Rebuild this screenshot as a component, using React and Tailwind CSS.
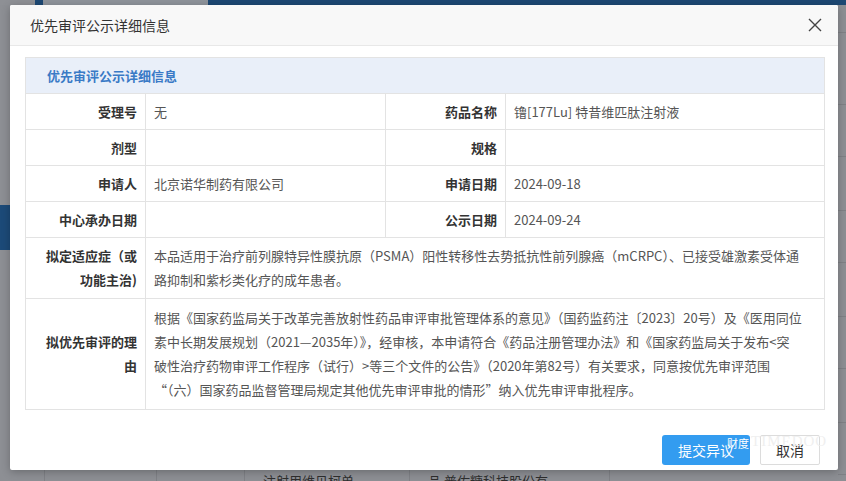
import React from "react";

const FONT = { fontFamily: '"Noto Sans CJK SC", "Noto Sans", "Liberation Sans", sans-serif' };

const LABEL = "flex items-center justify-end pr-[8px] pl-[10px] font-bold text-[#333] text-[13px] border-l border-t border-[#e3e3e3] text-right leading-[24px]";
const VALUE = "flex items-center pl-[8px] pr-[8px] text-[#555] text-[13px] border-l border-t border-[#e3e3e3] leading-[24px]";

const rows = [
  ["受理号", "无", "药品名称", "镥[177Lu] 特昔维匹肽注射液"],
  ["剂型", "", "规格", ""],
  ["申请人", "北京诺华制药有限公司", "申请日期", "2024-09-18"],
  ["中心承办日期", "", "公示日期", "2024-09-24"],
];

const indication = [
  "本品适用于治疗前列腺特异性膜抗原（PSMA）阳性转移性去势抵抗性前列腺癌（mCRPC）、已接受雄激素受体通",
  "路抑制和紫杉类化疗的成年患者。",
];

const reason = [
  "根据《国家药监局关于改革完善放射性药品审评审批管理体系的意见》（国药监药注〔2023〕20号）及《医用同位",
  "素中长期发展规划（2021—2035年）》，经审核，本申请符合《药品注册管理办法》和《国家药监局关于发布<突",
  "破性治疗药物审评工作程序（试行）>等三个文件的公告》（2020年第82号）有关要求，同意按优先审评范围",
  "“（六）国家药品监督管理局规定其他优先审评审批的情形”纳入优先审评审批程序。",
];

const Backdrop = () => (
  <>
    {/* top strip of the page behind */}
    <div className="absolute left-0 top-0 w-full h-[5px] flex">
      <div className="w-[35px] bg-[#8e9095]" />
      <div className="w-[8px] bg-[#1d4873]" />
      <div className="w-[165px] bg-[#8f949b]" />
      <div className="flex-1 bg-[#1d4873]" />
    </div>
    {/* left strip */}
    <div className="absolute left-0 top-[205px] w-[10px] h-[45px] bg-[#1c4a78]" />
    {/* right strip rows */}
    <div className="absolute right-0 top-[5px] w-[8px] h-[470px] flex flex-col">
      {[28, 72, 52, 54, 52, 54, 52, 54, 52].map((h, i) => (
        <div key={i} style={{ height: h }} className="border-b border-[#7f8186]" />
      ))}
    </div>
    {/* bottom strip */}
    <div className="absolute left-0 top-[470px] w-full h-[11px] flex text-[13px] text-[#2e2e2e] leading-[22px] overflow-hidden">
      <div className="w-[45px] border-r border-[#7f8186]" />
      <div className="w-[112px] border-r border-[#7f8186]" />
      <div className="w-[88px] border-r border-[#7f8186]" />
      <div className="w-[165px] pl-[18px] border-r border-[#7f8186] whitespace-nowrap">注射用维贝柯单</div>
      <div className="w-[200px] pl-[18px] border-r border-[#7f8186] whitespace-nowrap">品 普佐糖科技股份有</div>
      <div className="flex-1" />
    </div>
  </>
);

export default function App() {
  return (
    <div className="relative w-[846px] h-[481px] overflow-hidden bg-[#8d8f94]" style={FONT}>
      <Backdrop />

      {/* modal */}
      <div className="absolute left-[10px] top-[5px] w-[828px] h-[465px] bg-white rounded-[2px] shadow-[0_2px_8px_rgba(0,0,0,0.25)] flex flex-col">
        <div className="h-[41px] shrink-0 bg-[#f8f8f8] border-b border-[#e8e8e8] flex items-center justify-between pl-[20px] pr-[16px] rounded-t-[2px]">
          <span className="text-[14px] text-[#333]">优先审评公示详细信息</span>
          <svg width="14" height="14" viewBox="0 0 14 14" className="text-[#444]">
            <path d="M1 1 L13 13 M13 1 L1 13" stroke="currentColor" strokeWidth="1.4" fill="none" />
          </svg>
        </div>

        <div className="pt-[11px] pl-[15px]">
          <div className="w-[800px] border-r border-b border-[#e3e3e3]">
            <div className="h-[36px] bg-[#e9eff9] border-l border-t border-[#e3e3e3] flex items-center pl-[21px] text-[13px] font-bold text-[#3a7ac6]">
              优先审评公示详细信息
            </div>
            <div className="grid grid-cols-[120px_240px_120px_320px]">
              {rows.map(([l1, v1, l2, v2]) => (
                <React.Fragment key={l1}>
                  <div className={`${LABEL} h-[36px]`}>{l1}</div>
                  <div className={`${VALUE} h-[36px]`}>{v1}</div>
                  <div className={`${LABEL} h-[36px]`}>{l2}</div>
                  <div className={`${VALUE} h-[36px]`}>{v2}</div>
                </React.Fragment>
              ))}

              <div className={`${LABEL} h-[61px]`}>
                <span>拟定适应症（或<br />功能主治)</span>
              </div>
              <div className={`${VALUE} col-span-3 h-[61px]`}>
                <div>
                  {indication.map((t) => (
                    <div key={t} className="whitespace-nowrap">{t}</div>
                  ))}
                </div>
              </div>

              <div className={`${LABEL} h-[111px]`}>
                <span>拟优先审评的理<br />由</span>
              </div>
              <div className={`${VALUE} col-span-3 h-[111px]`}>
                <div>
                  {reason.map((t) => (
                    <div key={t} className="whitespace-nowrap">{t}</div>
                  ))}
                </div>
              </div>
            </div>
          </div>
        </div>

        <div className="mt-auto pb-[5px] pr-[18px] flex justify-end gap-[10px] relative">
          <button className="w-[88px] h-[30px] rounded-[3px] bg-[#339cf0] text-white text-[14px] text-left">
            <span className="pl-[16px]">提交异议</span>
          </button>
          <button className="w-[60px] h-[30px] rounded-[2px] border border-[#dcdcdc] bg-white text-[#333] text-[14px]">
            取消
          </button>
          {/* watermark */}
          <div className="absolute left-[717px] top-[-1px] flex items-end gap-[2px] pointer-events-none">
            <span className="text-[11px] text-white leading-none">财度</span>
            <span className="text-[15px] leading-none text-[#efefef] tracking-[1px]" style={{ fontFamily: '"Liberation Serif", serif' }}>TIMEDOO</span>
          </div>
        </div>
      </div>
    </div>
  );
}
